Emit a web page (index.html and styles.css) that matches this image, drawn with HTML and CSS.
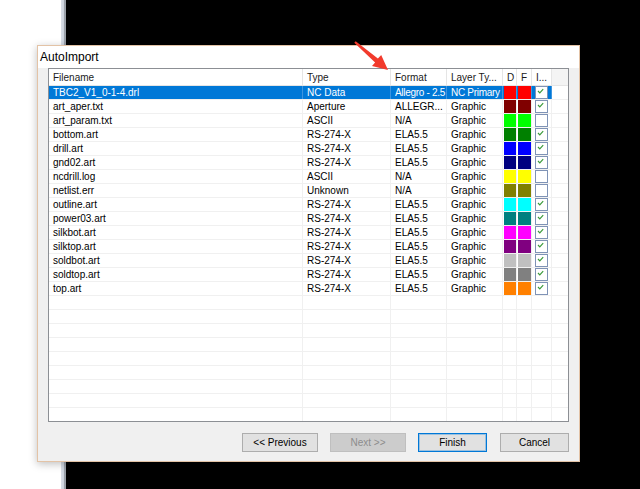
FILE: index.html
```html
<!DOCTYPE html>
<html>
<head>
<meta charset="utf-8">
<link rel="stylesheet" href="styles.css">
</head>
<body>
<div class="desktop">
  <div class="desk-white"></div>
  <div class="desk-edge"></div>
  <div class="desk-black"></div>
</div>

<div class="dialog">
  <div class="titlebar">AutoImport</div>
  <div class="listbox">
    <div class="row head">
      <div class="cell">Filename</div>
      <div class="cell">Type</div>
      <div class="cell">Format</div>
      <div class="cell">Layer Ty...</div>
      <div class="cell">D</div>
      <div class="cell">F</div>
      <div class="cell">I...</div>
      <div class="cell fill"></div>
    </div>

    <div class="row sel">
      <div class="cell">TBC2_V1_0-1-4.drl</div><div class="cell">NC Data</div><div class="cell tight">Allegro - 2.5</div><div class="cell tight">NC Primary</div>
      <div class="cell sw"><span style="background:#ff0000"></span></div><div class="cell sw"><span style="background:#ff0000"></span></div>
      <div class="cell ck"><span class="box"><svg viewBox="0 0 11 11"><path d="M2 4 L3.8 5.8 L7.2 2.2"/></svg></span></div><div class="cell fill"></div>
    </div>
    <div class="row">
      <div class="cell">art_aper.txt</div><div class="cell">Aperture</div><div class="cell">ALLEGR...</div><div class="cell">Graphic</div>
      <div class="cell sw"><span style="background:#800000"></span></div><div class="cell sw"><span style="background:#800000"></span></div>
      <div class="cell ck"><span class="box"><svg viewBox="0 0 11 11"><path d="M2 4 L3.8 5.8 L7.2 2.2"/></svg></span></div><div class="cell fill"></div>
    </div>
    <div class="row">
      <div class="cell">art_param.txt</div><div class="cell">ASCII</div><div class="cell">N/A</div><div class="cell">Graphic</div>
      <div class="cell sw"><span style="background:#00ff00"></span></div><div class="cell sw"><span style="background:#00ff00"></span></div>
      <div class="cell ck"><span class="box"></span></div><div class="cell fill"></div>
    </div>
    <div class="row">
      <div class="cell">bottom.art</div><div class="cell">RS-274-X</div><div class="cell">ELA5.5</div><div class="cell">Graphic</div>
      <div class="cell sw"><span style="background:#008000"></span></div><div class="cell sw"><span style="background:#008000"></span></div>
      <div class="cell ck"><span class="box"><svg viewBox="0 0 11 11"><path d="M2 4 L3.8 5.8 L7.2 2.2"/></svg></span></div><div class="cell fill"></div>
    </div>
    <div class="row">
      <div class="cell">drill.art</div><div class="cell">RS-274-X</div><div class="cell">ELA5.5</div><div class="cell">Graphic</div>
      <div class="cell sw"><span style="background:#0000ff"></span></div><div class="cell sw"><span style="background:#0000ff"></span></div>
      <div class="cell ck"><span class="box"><svg viewBox="0 0 11 11"><path d="M2 4 L3.8 5.8 L7.2 2.2"/></svg></span></div><div class="cell fill"></div>
    </div>
    <div class="row">
      <div class="cell">gnd02.art</div><div class="cell">RS-274-X</div><div class="cell">ELA5.5</div><div class="cell">Graphic</div>
      <div class="cell sw"><span style="background:#000080"></span></div><div class="cell sw"><span style="background:#000080"></span></div>
      <div class="cell ck"><span class="box"><svg viewBox="0 0 11 11"><path d="M2 4 L3.8 5.8 L7.2 2.2"/></svg></span></div><div class="cell fill"></div>
    </div>
    <div class="row">
      <div class="cell">ncdrill.log</div><div class="cell">ASCII</div><div class="cell">N/A</div><div class="cell">Graphic</div>
      <div class="cell sw"><span style="background:#ffff00"></span></div><div class="cell sw"><span style="background:#ffff00"></span></div>
      <div class="cell ck"><span class="box"></span></div><div class="cell fill"></div>
    </div>
    <div class="row">
      <div class="cell">netlist.err</div><div class="cell">Unknown</div><div class="cell">N/A</div><div class="cell">Graphic</div>
      <div class="cell sw"><span style="background:#808000"></span></div><div class="cell sw"><span style="background:#808000"></span></div>
      <div class="cell ck"><span class="box"></span></div><div class="cell fill"></div>
    </div>
    <div class="row">
      <div class="cell">outline.art</div><div class="cell">RS-274-X</div><div class="cell">ELA5.5</div><div class="cell">Graphic</div>
      <div class="cell sw"><span style="background:#00ffff"></span></div><div class="cell sw"><span style="background:#00ffff"></span></div>
      <div class="cell ck"><span class="box"><svg viewBox="0 0 11 11"><path d="M2 4 L3.8 5.8 L7.2 2.2"/></svg></span></div><div class="cell fill"></div>
    </div>
    <div class="row">
      <div class="cell">power03.art</div><div class="cell">RS-274-X</div><div class="cell">ELA5.5</div><div class="cell">Graphic</div>
      <div class="cell sw"><span style="background:#008080"></span></div><div class="cell sw"><span style="background:#008080"></span></div>
      <div class="cell ck"><span class="box"><svg viewBox="0 0 11 11"><path d="M2 4 L3.8 5.8 L7.2 2.2"/></svg></span></div><div class="cell fill"></div>
    </div>
    <div class="row">
      <div class="cell">silkbot.art</div><div class="cell">RS-274-X</div><div class="cell">ELA5.5</div><div class="cell">Graphic</div>
      <div class="cell sw"><span style="background:#ff00ff"></span></div><div class="cell sw"><span style="background:#ff00ff"></span></div>
      <div class="cell ck"><span class="box"><svg viewBox="0 0 11 11"><path d="M2 4 L3.8 5.8 L7.2 2.2"/></svg></span></div><div class="cell fill"></div>
    </div>
    <div class="row">
      <div class="cell">silktop.art</div><div class="cell">RS-274-X</div><div class="cell">ELA5.5</div><div class="cell">Graphic</div>
      <div class="cell sw"><span style="background:#800080"></span></div><div class="cell sw"><span style="background:#800080"></span></div>
      <div class="cell ck"><span class="box"><svg viewBox="0 0 11 11"><path d="M2 4 L3.8 5.8 L7.2 2.2"/></svg></span></div><div class="cell fill"></div>
    </div>
    <div class="row">
      <div class="cell">soldbot.art</div><div class="cell">RS-274-X</div><div class="cell">ELA5.5</div><div class="cell">Graphic</div>
      <div class="cell sw"><span style="background:#c0c0c0"></span></div><div class="cell sw"><span style="background:#c0c0c0"></span></div>
      <div class="cell ck"><span class="box"><svg viewBox="0 0 11 11"><path d="M2 4 L3.8 5.8 L7.2 2.2"/></svg></span></div><div class="cell fill"></div>
    </div>
    <div class="row">
      <div class="cell">soldtop.art</div><div class="cell">RS-274-X</div><div class="cell">ELA5.5</div><div class="cell">Graphic</div>
      <div class="cell sw"><span style="background:#808080"></span></div><div class="cell sw"><span style="background:#808080"></span></div>
      <div class="cell ck"><span class="box"><svg viewBox="0 0 11 11"><path d="M2 4 L3.8 5.8 L7.2 2.2"/></svg></span></div><div class="cell fill"></div>
    </div>
    <div class="row">
      <div class="cell">top.art</div><div class="cell">RS-274-X</div><div class="cell">ELA5.5</div><div class="cell">Graphic</div>
      <div class="cell sw"><span style="background:#ff8000"></span></div><div class="cell sw"><span style="background:#ff8000"></span></div>
      <div class="cell ck"><span class="box"><svg viewBox="0 0 11 11"><path d="M2 4 L3.8 5.8 L7.2 2.2"/></svg></span></div><div class="cell fill"></div>
    </div>

    <div class="row empty"><div class="cell"></div><div class="cell"></div><div class="cell"></div><div class="cell"></div><div class="cell"></div><div class="cell"></div><div class="cell"></div><div class="cell fill"></div></div>
    <div class="row empty"><div class="cell"></div><div class="cell"></div><div class="cell"></div><div class="cell"></div><div class="cell"></div><div class="cell"></div><div class="cell"></div><div class="cell fill"></div></div>
    <div class="row empty"><div class="cell"></div><div class="cell"></div><div class="cell"></div><div class="cell"></div><div class="cell"></div><div class="cell"></div><div class="cell"></div><div class="cell fill"></div></div>
    <div class="row empty"><div class="cell"></div><div class="cell"></div><div class="cell"></div><div class="cell"></div><div class="cell"></div><div class="cell"></div><div class="cell"></div><div class="cell fill"></div></div>
    <div class="row empty"><div class="cell"></div><div class="cell"></div><div class="cell"></div><div class="cell"></div><div class="cell"></div><div class="cell"></div><div class="cell"></div><div class="cell fill"></div></div>
    <div class="row empty"><div class="cell"></div><div class="cell"></div><div class="cell"></div><div class="cell"></div><div class="cell"></div><div class="cell"></div><div class="cell"></div><div class="cell fill"></div></div>
    <div class="row empty"><div class="cell"></div><div class="cell"></div><div class="cell"></div><div class="cell"></div><div class="cell"></div><div class="cell"></div><div class="cell"></div><div class="cell fill"></div></div>
    <div class="row empty"><div class="cell"></div><div class="cell"></div><div class="cell"></div><div class="cell"></div><div class="cell"></div><div class="cell"></div><div class="cell"></div><div class="cell fill"></div></div>
    <div class="row empty"><div class="cell"></div><div class="cell"></div><div class="cell"></div><div class="cell"></div><div class="cell"></div><div class="cell"></div><div class="cell"></div><div class="cell fill"></div></div>
  </div>

  <div class="buttons">
    <button class="btn wide">&lt;&lt; Previous</button>
    <button class="btn wide disabled">Next &gt;&gt;</button>
    <button class="btn default">Finish</button>
    <button class="btn">Cancel</button>
  </div>
</div>

<svg class="arrow" width="640" height="489" viewBox="0 0 640 489">
  <polygon points="354.3,42.8 375.1,62.5 372.0,66.0 388.0,70.0 381.2,55.0 377.9,58.6 355.7,41.2"/>
</svg>
</body>
</html>
```

FILE: styles.css
```css
html, body {
  margin: 0;
  padding: 0;
  width: 640px;
  height: 489px;
  overflow: hidden;
  font-family: "Liberation Sans", Arial, sans-serif;
}

.desktop {
  display: flex;
  height: 489px;
}
.desk-white { width: 61px; background: #ffffff; }
.desk-edge {
  width: 5px;
  background: linear-gradient(to right, #d9dee6 0, #cbd2dc 3px, #9aa0a8 3px, #9aa0a8 5px);
}
.desk-black { flex: 1; background: #000000; }

.dialog {
  position: absolute;
  left: 37px;
  top: 45px;
  width: 543px;
  height: 417px;
  box-sizing: border-box;
  border: 1px solid #e3c3a6;
  background: #f0f0f0;
  box-shadow: 0 2px 8px rgba(0, 0, 0, 0.25);
  display: flex;
  flex-direction: column;
}

.titlebar {
  height: 22px;
  box-sizing: border-box;
  padding: 1px 0 0 2px;
  line-height: 21px;
  font-size: 12px;
  color: #000;
  background: #ffffff;
}

.listbox {
  margin: 0 10px;
  height: 354px;
  box-sizing: border-box;
  border: 1px solid #8c8f94;
  background: #ffffff;
  overflow: hidden;
}

.row {
  display: grid;
  grid-template-columns: 254px 88px 56px 56px 14px 15px 20px 1fr;
  height: 14px;
  box-sizing: border-box;
  border-bottom: 1px solid #f0f0f0;
}

.cell {
  box-sizing: border-box;
  border-right: 1px solid #f0f0f0;
  padding: 1px 0 0 4px;
  font-size: 10px;
  line-height: 12px;
  color: #000;
  white-space: nowrap;
  overflow: hidden;
}
.cell.fill { border-right: none; }
.cell.tight { letter-spacing: -0.3px; }

.row.head {
  height: 17px;
  border-bottom: 1px solid #e5e5e5;
}
.row.head .cell {
  padding-top: 1px;
  line-height: 15px;
  border-right-color: #e5e5e5;
  color: #1a1a1a;
}
.row.head .cell.fill { background: #f4f4f4; }

.row.sel .cell {
  background: #0078d7;
  color: #ffffff;
  border-right-color: #3d95df;
}
.row.sel .cell.fill {
  background: #ffffff;
}

.cell.sw { padding: 0 0 0 1px; }
.cell.sw span {
  display: block;
  width: 12px;
  height: 13px;
}
.cell.sw + .cell.sw span { width: 13px; }

.cell.ck { padding: 0 0 0 3px; }
.box {
  display: block;
  width: 13px;
  height: 13px;
  box-sizing: border-box;
  border: 1px solid #7f93b6;
  background: #ffffff;
}
.box svg {
  display: block;
  width: 11px;
  height: 11px;
}
.box path {
  fill: none;
  stroke: #3a9a3a;
  stroke-width: 1.2;
}

.buttons {
  display: flex;
  justify-content: flex-end;
  gap: 12px;
  margin-top: 11px;
  padding: 0 10px;
}
.btn {
  width: 69px;
  height: 19px;
  box-sizing: border-box;
  margin: 0;
  padding: 0;
  border: 1px solid #adadad;
  background: #e1e1e1;
  font-family: "Liberation Sans", Arial, sans-serif;
  font-size: 10px;
  color: #000;
  line-height: 17px;
}
.btn.wide { width: 76px; }
.btn.disabled {
  background: #cccccc;
  border-color: #bfbfbf;
  color: #8d8d8d;
}
.btn.default {
  border-color: #0078d7;
  box-shadow: inset 0 0 0 1px rgba(0, 120, 215, 0.3);
  margin-right: 1px;
}

.arrow {
  position: absolute;
  left: 0;
  top: 0;
  pointer-events: none;
}
.arrow polygon { fill: #f23a2c; }
```
